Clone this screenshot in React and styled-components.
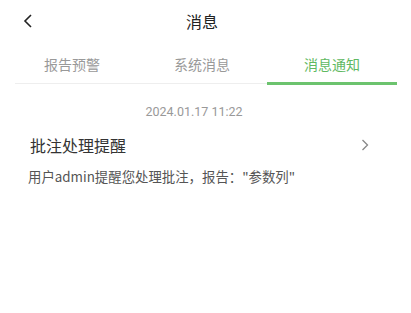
import React, { useState } from "react";
import styled, { createGlobalStyle } from "styled-components";

const Global = createGlobalStyle`
  html, body { margin: 0; padding: 0; background: #fff; }
  body { font-family: "Noto Sans CJK SC", "Noto Sans", sans-serif; }
`;

const Page = styled.div`
  width: 390px;
  margin-left: 7px;
  background: #fff;
`;

const Header = styled.div`
  height: 42px;
  display: flex;
  align-items: center;
  justify-content: center;
  position: relative;
`;

const BackBtn = styled.div`
  position: absolute;
  left: 14px;
  top: 13px;
  width: 14px;
  height: 16px;
  display: flex;
`;

const Title = styled.div`
  font-size: 16px;
  color: #222;
  line-height: 22px;
`;

const TabBar = styled.div`
  display: flex;
  height: 43px;
  position: relative;
  &::after {
    content: "";
    position: absolute;
    left: 8px;
    right: 0;
    bottom: 1px;
    height: 1px;
    background: #eeeeee;
  }
`;

const Tab = styled.div`
  flex: 1;
  display: flex;
  align-items: center;
  justify-content: center;
  font-size: 14px;
  color: ${(p) => (p.$active ? "#5fb962" : "#999")};
  position: relative;
  z-index: 1;
  &::after {
    content: "";
    position: absolute;
    left: 0;
    right: 0;
    bottom: 0;
    height: 3px;
    background: ${(p) => (p.$active ? "#6cc36e" : "transparent")};
  }
`;

const DateRow = styled.div`
  padding: 18px 16px 0 0;
  text-align: center;
  font-family: "Roboto", "Noto Sans", sans-serif;
  font-size: 12.5px;
  line-height: 18px;
  color: #999;
`;

const Card = styled.div`
  padding: 13px 0 0 21px;
  display: flex;
  flex-direction: column;
`;

const CardHead = styled.div`
  display: flex;
  align-items: center;
  justify-content: space-between;
  height: 22px;
  padding-right: 28px;
`;

const CardTitle = styled.div`
  font-size: 16px;
  line-height: 22px;
  color: #333;
  padding-left: 2px;
`;

const CardText = styled.div`
  margin-top: 11px;
  font-size: 13.4px;
  line-height: 18px;
  color: #555;
`;

export default function App() {
  const [active, setActive] = useState(2);
  const tabs = ["报告预警", "系统消息", "消息通知"];
  return (
    <>
      <Global />
      <Page>
        <Header>
          <BackBtn>
            <svg width="14" height="16" viewBox="0 0 14 16">
              <path d="M10 2 L4 8 L10 14" fill="none" stroke="#222" strokeWidth="1.6" />
            </svg>
          </BackBtn>
          <Title>消息</Title>
        </Header>
        <TabBar>
          {tabs.map((t, i) => (
            <Tab key={t} $active={i === active} onClick={() => setActive(i)}>
              {t}
            </Tab>
          ))}
        </TabBar>
        <DateRow>2024.01.17 11:22</DateRow>
        <Card>
          <CardHead>
            <CardTitle>批注处理提醒</CardTitle>
            <svg width="8" height="12" viewBox="0 0 8 12">
              <path d="M1.5 1 L6.5 6 L1.5 11" fill="none" stroke="#888" strokeWidth="1.3" />
            </svg>
          </CardHead>
          <CardText>用户admin提醒您处理批注，报告："参数列"</CardText>
        </Card>
      </Page>
    </>
  );
}
